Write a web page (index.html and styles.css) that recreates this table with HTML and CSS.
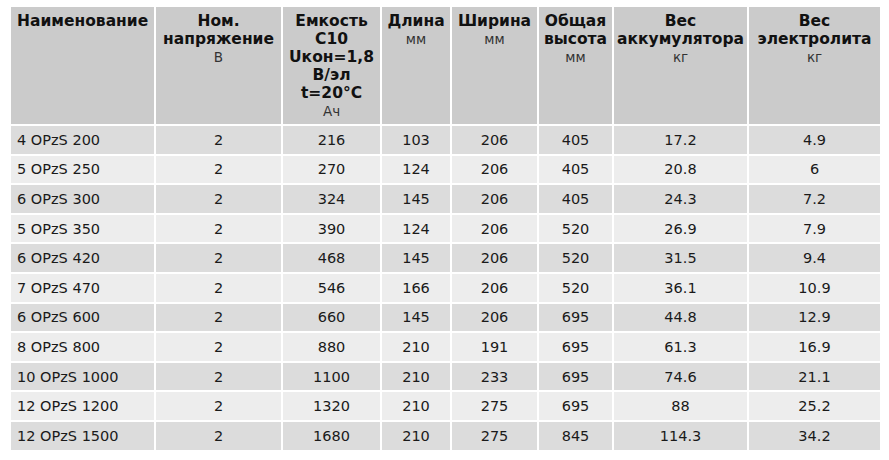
FILE: index.html
```html
<!DOCTYPE html>
<html lang="ru">
<head>
<meta charset="utf-8">
<title>OPzS</title>
<link rel="stylesheet" href="styles.css">
</head>
<body>
<table class="spec">
  <colgroup>
    <col class="c1"><col class="c2"><col class="c3"><col class="c4"><col class="c5"><col class="c6"><col class="c7"><col class="c8">
  </colgroup>
  <thead>
    <tr>
      <th class="left">Наименование</th>
      <th>Ном. напряжение<span class="unit">В</span></th>
      <th>Емкость C10 Uкон=1,8 В/эл t=20°C<span class="unit">Ач</span></th>
      <th>Длина<span class="unit">мм</span></th>
      <th>Ширина<span class="unit">мм</span></th>
      <th>Общая высота<span class="unit">мм</span></th>
      <th>Вес аккумулятора<span class="unit">кг</span></th>
      <th>Вес электролита<span class="unit">кг</span></th>
    </tr>
  </thead>
  <tbody>
    <tr><td class="left">4 OPzS 200</td><td>2</td><td>216</td><td>103</td><td>206</td><td>405</td><td>17.2</td><td>4.9</td></tr>
    <tr><td class="left">5 OPzS 250</td><td>2</td><td>270</td><td>124</td><td>206</td><td>405</td><td>20.8</td><td>6</td></tr>
    <tr><td class="left">6 OPzS 300</td><td>2</td><td>324</td><td>145</td><td>206</td><td>405</td><td>24.3</td><td>7.2</td></tr>
    <tr><td class="left">5 OPzS 350</td><td>2</td><td>390</td><td>124</td><td>206</td><td>520</td><td>26.9</td><td>7.9</td></tr>
    <tr><td class="left">6 OPzS 420</td><td>2</td><td>468</td><td>145</td><td>206</td><td>520</td><td>31.5</td><td>9.4</td></tr>
    <tr><td class="left">7 OPzS 470</td><td>2</td><td>546</td><td>166</td><td>206</td><td>520</td><td>36.1</td><td>10.9</td></tr>
    <tr><td class="left">6 OPzS 600</td><td>2</td><td>660</td><td>145</td><td>206</td><td>695</td><td>44.8</td><td>12.9</td></tr>
    <tr><td class="left">8 OPzS 800</td><td>2</td><td>880</td><td>210</td><td>191</td><td>695</td><td>61.3</td><td>16.9</td></tr>
    <tr><td class="left">10 OPzS 1000</td><td>2</td><td>1100</td><td>210</td><td>233</td><td>695</td><td>74.6</td><td>21.1</td></tr>
    <tr><td class="left">12 OPzS 1200</td><td>2</td><td>1320</td><td>210</td><td>275</td><td>695</td><td>88</td><td>25.2</td></tr>
    <tr><td class="left">12 OPzS 1500</td><td>2</td><td>1680</td><td>210</td><td>275</td><td>845</td><td>114.3</td><td>34.2</td></tr>
  </tbody>
</table>
</body>
</html>
```
FILE: styles.css
```css
html, body {
  margin: 0;
  padding: 0;
  background: #ffffff;
}

.spec {
  margin: 5px 0 0 9px;
  border-collapse: collapse;
  table-layout: fixed;
  width: 871px;
  font-family: "DejaVu Sans", Verdana, sans-serif;
  font-size: 14.5px;
  color: #1a1a1a;
}

.c1 { width: 145px; }
.c2 { width: 127px; }
.c3 { width: 99px; }
.c4 { width: 70px; }
.c5 { width: 87px; }
.c6 { width: 75px; }
.c7 { width: 135px; }
.c8 { width: 133px; }

.spec th,
.spec td {
  border: 2px solid #ffffff;
  text-align: center;
  padding: 0 4px;
}

.spec th {
  background: #cbcbcb;
  vertical-align: top;
  font-weight: bold;
  font-size: 15.5px;
  line-height: 18px;
  height: 119px;
  padding: 5px 1px 0;
  box-sizing: border-box;
  color: #111111;
}

.spec .unit {
  display: block;
  font-weight: normal;
  font-size: 13.5px;
  color: #333333;
}

.spec td {
  height: 29.6px;
  box-sizing: border-box;
  vertical-align: middle;
  line-height: 18px;
}

.spec tbody tr:nth-child(odd) td { background: #dcdcdc; }
.spec tbody tr:nth-child(even) td { background: #ededed; }

.spec .left {
  text-align: left;
  padding-left: 6px;
}
```
